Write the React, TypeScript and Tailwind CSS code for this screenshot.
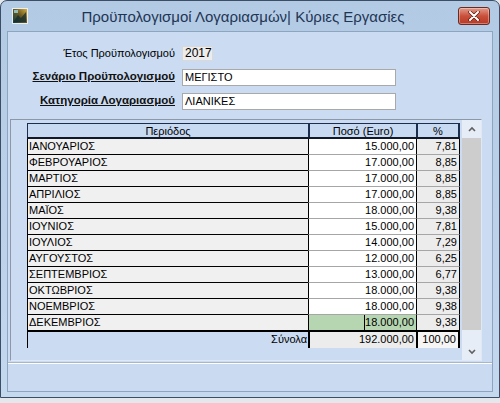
import React from 'react';

const rows: [string, string, string][] = [
  ['ΙΑΝΟΥΑΡΙΟΣ', '15.000,00', '7,81'],
  ['ΦΕΒΡΟΥΑΡΙΟΣ', '17.000,00', '8,85'],
  ['ΜΑΡΤΙΟΣ', '17.000,00', '8,85'],
  ['ΑΠΡΙΛΙΟΣ', '17.000,00', '8,85'],
  ['ΜΑΪΟΣ', '18.000,00', '9,38'],
  ['ΙΟΥΝΙΟΣ', '15.000,00', '7,81'],
  ['ΙΟΥΛΙΟΣ', '14.000,00', '7,29'],
  ['ΑΥΓΟΥΣΤΟΣ', '12.000,00', '6,25'],
  ['ΣΕΠΤΕΜΒΡΙΟΣ', '13.000,00', '6,77'],
  ['ΟΚΤΩΒΡΙΟΣ', '18.000,00', '9,38'],
  ['ΝΟΕΜΒΡΙΟΣ', '18.000,00', '9,38'],
  ['ΔΕΚΕΜΒΡΙΟΣ', '18.000,00', '9,38'],
];

function AppIcon() {
  return (
    <svg width="16" height="16" viewBox="0 0 16 16">
      <defs>
        <linearGradient id="ic" x1="1" y1="0" x2="0" y2="1">
          <stop offset="0" stopColor="#e2b640" />
          <stop offset="0.45" stopColor="#6b5a22" />
          <stop offset="1" stopColor="#0b3d44" />
        </linearGradient>
      </defs>
      <rect x="0.5" y="0.5" width="15" height="15" fill="url(#ic)" stroke="#e9eef2" />
      <path d="M2 13 L6 7 L9 10 L14 4 L14 14 L2 14 Z" fill="#0f2a2e" opacity="0.7" />
      <rect x="2" y="2" width="4" height="3" fill="#9fd4d8" opacity="0.8" />
    </svg>
  );
}

function CloseButton() {
  return (
    <div className="w-[32px] h-[18px] rounded-[3px] border border-[#6b2a20] bg-gradient-to-b from-[#e29a8a] via-[#c9503b] to-[#b83a24] flex items-center justify-center shadow-[inset_0_0_0_1px_rgba(255,255,255,0.35)]">
      <svg width="12" height="10" viewBox="0 0 12 10">
        <path d="M2 1 L10 9 M10 1 L2 9" stroke="#5a1a12" strokeWidth="3.4" strokeLinecap="round" />
        <path d="M2 1 L10 9 M10 1 L2 9" stroke="#ffffff" strokeWidth="2" strokeLinecap="round" />
      </svg>
    </div>
  );
}

function Chevron({ up }: { up?: boolean }) {
  return (
    <svg width="8" height="6" viewBox="0 0 8 6">
      <path d={up ? 'M1 5 L4 2 L7 5' : 'M1 1 L4 4 L7 1'} fill="none" stroke="#606060" strokeWidth="1.6" />
    </svg>
  );
}

export default function App() {
  return (
    <div className="w-[500px] h-[403px] bg-[#e4e8ec] overflow-hidden font-['Liberation_Sans',Arial,sans-serif] text-black">
      <div className="h-[398px] rounded-t-[7px] border border-[#3b4e66] bg-gradient-to-b from-[#b3cae4] to-[#c4d8ee] flex flex-col">
        {/* title bar */}
        <div className="h-[30px] flex items-center pl-[11px] pr-[9px]">
          <AppIcon />
          <div className="flex-1 text-center text-[15px] text-[#1e3656] pt-[2px]">
            Προϋπολογισμοί Λογαριασμών| Κύριες Εργασίες
          </div>
          <CloseButton />
        </div>

        {/* client area */}
        <div className="mx-[6px] mb-[5px] flex-1 border border-[#8ea5c1] bg-[#cadbf2] flex flex-col">
          <div className="pt-[12px] flex flex-col gap-[6px] text-[11px]">
            <div className="h-[18px] flex items-center">
              <div className="w-[168px] text-right pr-[1px]">Έτος Προϋπολογισμού</div>
              <div className="ml-[6px] w-[31px] h-[15px] bg-[#ececec] border border-[#d9d9d9] leading-[13px] pl-[2px] text-[12px]">2017</div>
            </div>
            <div className="h-[18px] flex items-center">
              <div className="w-[168px] text-right font-bold underline pr-[1px] text-[11.5px] text-[#111]">Σενάριο Προϋπολογισμού</div>
              <div className="ml-[6px] w-[214px] h-[17px] bg-white border border-[#a9a9a9] leading-[15px] pl-[2px]">ΜΕΓΙΣΤΟ</div>
            </div>
            <div className="h-[18px] flex items-center">
              <div className="w-[168px] text-right font-bold underline pr-[1px] text-[11.5px] text-[#111]">Κατηγορία Λογαριασμού</div>
              <div className="ml-[6px] w-[214px] h-[17px] bg-white border border-[#a9a9a9] leading-[15px] pl-[2px]">ΛΙΑΝΙΚΕΣ</div>
            </div>
          </div>

          {/* grid panel */}
          <div className="mt-[9px] ml-[2px] w-[472px] h-[242px] border border-[#8d98a6] border-r-[#dfe8f4] border-b-[#dfe8f4] flex">
            <div className="w-[16px]" />
            <div className="w-[433px] pt-[3px] text-[11px] leading-[14px]">
              <div className="h-[16px] flex bg-[#c8daf2] border-t border-t-[#1c2e4e] border-b-2 border-b-[#111827]">
                <div className="w-[281px] border-l border-[#1c2e4e] text-center">Περιόδος</div>
                <div className="w-[108px] border-l-2 border-[#1c2e4e] text-center">Ποσό (Euro)</div>
                <div className="w-[44px] border-l-2 border-r-2 border-[#1c2e4e] text-center">%</div>
              </div>
              {rows.map(([m, a, p], i) => {
                const last = i === rows.length - 1;
                return (
                  <div key={m} className={last ? 'h-[17px] flex border-b-2 border-black' : 'h-[16px] flex'}>
                    <div className={last ? 'w-[281px] bg-[#f0f0f0] border-l border-black pl-[1px] leading-[15px]' : 'w-[281px] bg-[#f0f0f0] border-l border-b border-black pl-[1px] leading-[15px]'}>{m}</div>
                    <div className={last ? 'w-[108px] bg-[#b6d6b1] border-l border-black text-right pr-[2px] leading-[15px] flex justify-end' : 'w-[108px] bg-white border-l border-l-black border-b border-b-[#a6a6a6] text-right pr-[2px] leading-[15px]'}>
                      {last ? (
                        <span className="border-l border-black">{a}</span>
                      ) : (
                        a
                      )}
                    </div>
                    <div className={last ? 'w-[44px] bg-[#ececec] border-l border-r border-black text-right pr-[2px] leading-[15px]' : 'w-[44px] bg-[#ececec] border-l border-r border-l-black border-r-black border-b border-b-[#a6a6a6] text-right pr-[2px] leading-[15px]'}>{p}</div>
                  </div>
                );
              })}
              <div className="h-[16px] flex">
                <div className="w-[281px] border-l border-black text-right pr-[1px] leading-[15px]">Σύνολα</div>
                <div className="w-[108px] bg-[#ececec] border-l-2 border-black text-right pr-[2px] leading-[15px]">192.000,00</div>
                <div className="w-[44px] bg-[#f5f5f5] border-l-2 border-r-2 border-black text-right pr-[2px] leading-[15px]">100,00</div>
              </div>
            </div>
            <div className="w-[2px]" />
            <div className="w-[19px] h-full bg-[#e6edf7] flex flex-col">
              <div className="h-[18px] flex items-center justify-center">
                <Chevron up />
              </div>
              <div className="h-[192px] bg-[#cdcdcd]" />
              <div className="flex-1" />
              <div className="h-[17px] flex items-center justify-center">
                <Chevron />
              </div>
            </div>
          </div>

          {/* bottom strip */}
          <div className="mt-[1px] border-t border-[#a7b7cb]" />
          <div className="flex-1 border-t border-white bg-[#c9daf1]" />
        </div>
      </div>
    </div>
  );
}
